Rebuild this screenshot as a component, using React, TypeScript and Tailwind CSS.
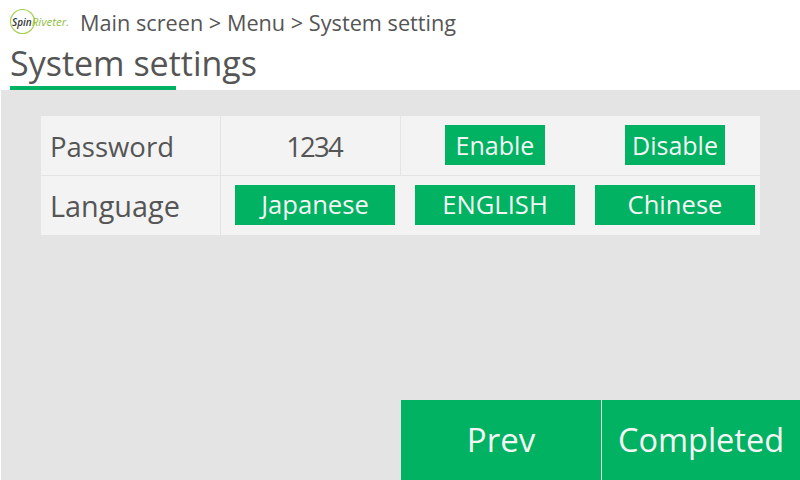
import React from "react";

const font = "font-['Open_Sans',sans-serif]";

const GreenButton = ({ label, wide }: { label: string; wide?: boolean }) => (
  <button
    className={
      wide
        ? "w-[160px] h-10 bg-[#00b261] text-[#f5f5f5] text-[25.6px] leading-none flex items-center justify-center shrink-0"
        : "w-[100px] h-10 bg-[#00b261] text-[#f5f5f5] text-[25px] leading-none flex items-center justify-center shrink-0"
    }
  >
    {label}
  </button>
);

export default function App() {
  return (
    <div className={`w-[800px] h-[480px] flex flex-col bg-white overflow-hidden ${font}`}>
      {/* Header */}
      <header className="h-[90px] shrink-0 pl-[10px] flex flex-col">
        <div className="h-[46px] flex items-center">
          <div className="relative w-[60px] h-[28px] shrink-0">
            <svg width="28" height="28" viewBox="0 0 28 28" className="absolute left-0 top-0">
              <circle cx="12.5" cy="12.5" r="12" fill="none" stroke="#a6cf52" strokeWidth="1.2" />
            </svg>
            <span className="absolute left-[2px] top-[7px] text-[10px] leading-[11px] italic font-semibold text-[#333] whitespace-nowrap">
              Spin<span className="text-[11.5px] font-normal text-[#8fbf3f]">Riveter.</span>
            </span>
          </div>
          <span className="ml-[10px] text-[21.7px] leading-none text-[#555] whitespace-nowrap">
            Main screen &gt; Menu &gt; System setting
          </span>
        </div>
        <div className="w-[166px] h-[44px] border-b-[4px] border-[#00b261]">
          <span className="block text-[34px] leading-[34px] text-[#555] whitespace-nowrap">
            System settings
          </span>
        </div>
      </header>

      {/* Body */}
      <main className="flex-1 ml-px bg-[#e4e4e4] flex flex-col justify-between pt-[26px]">
        <div className="ml-[40px] w-[719px] h-[119px] bg-[#f3f3f3] flex flex-col text-[27.5px] text-[#555]">
          <div className="h-[60px] flex border-b border-[#e4e4e4]">
            <div className="w-[180px] flex items-center pl-[9px] pt-[2px] border-r border-[#e4e4e4]">Password</div>
            <div className="w-[180px] flex items-center justify-center pl-[7px] pt-[2px] border-r border-[#e4e4e4] tracking-[-1.8px]">1234</div>
            <div className="w-[180px] flex justify-center pl-[8px] pt-[9px]">
              <GreenButton label="Enable" />
            </div>
            <div className="w-[179px] flex justify-center pl-[9px] pt-[9px]">
              <GreenButton label="Disable" />
            </div>
          </div>
          <div className="h-[59px] flex">
            <div className="w-[180px] h-full flex items-center pl-[9px] border-r border-[#e4e4e4] text-[28.8px]">Language</div>
            <div className="flex gap-5 pl-[14px] pt-[9px]">
              <GreenButton label="Japanese" wide />
              <GreenButton label="ENGLISH" wide />
              <GreenButton label="Chinese" wide />
            </div>
          </div>
        </div>

        {/* Footer buttons */}
        <div className="h-20 flex justify-end">
          <button className="w-[200px] h-full bg-[#00b261] text-[#f5f5f5] text-[33px] flex items-center justify-center">
            Prev
          </button>
          <div className="w-px h-full bg-[#e4e4e4]" />
          <button className="w-[198px] h-full bg-[#00b261] text-[#f5f5f5] text-[32.5px] flex items-center justify-center">
            Completed
          </button>
        </div>
      </main>
    </div>
  );
}
